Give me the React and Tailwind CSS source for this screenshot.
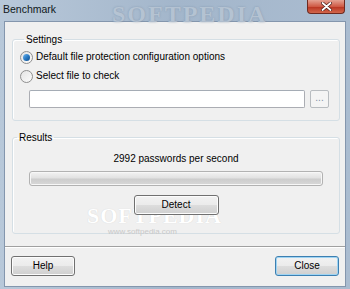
import React from 'react';

const font = { fontFamily: '"Liberation Sans", Arial, sans-serif' };

function Radio({ checked, label }) {
  return (
    <label className="flex items-center h-[14px] gap-[3px] text-[10px] leading-[14px] text-black">
      <span className="w-[13px] h-[13px] rounded-full border border-[#8f8f8f] bg-gradient-to-br from-[#e4e4e4] to-[#fbfbfb] flex items-center justify-center">
        {checked && (
          <span className="w-[7px] h-[7px] rounded-full bg-gradient-to-br from-[#6fb8f0] via-[#2a7bc4] to-[#0c4c8c]" />
        )}
      </span>
      <span>{label}</span>
    </label>
  );
}

function Button({ children, focused, className = '' }) {
  return (
    <button
      className={`relative z-10 rounded-[3px] border text-[10px] text-black leading-none flex items-center justify-center bg-[linear-gradient(#f2f2f2_0%,#ebebeb_50%,#dddddd_51%,#cfcfcf_100%)] ${
        focused
          ? 'border-[#3c7fb1] shadow-[inset_0_0_0_1px_#9fd4f3]'
          : 'border-[#707070] shadow-[inset_0_0_0_1px_#fcfcfc]'
      } ${className}`}
    >
      {children}
    </button>
  );
}

export default function App() {
  return (
    <div
      className="w-[350px] h-[289px] relative overflow-hidden flex flex-col bg-[linear-gradient(90deg,#b8c8d9,#a3b6cb_50%,#aabcd0)]"
      style={font}
    >
      {/* title bar */}
      <div className="relative h-[21px] flex items-start justify-between shrink-0">
        <span className="relative z-10 pl-[3px] pt-[3px] text-[10.5px] leading-[13px] text-[#101820]">Benchmark</span>
        <div
          className="absolute left-[112px] top-[-4px] text-[24px] font-bold tracking-[2px] text-[#b9c6d4] opacity-80 [text-shadow:0_0_2px_#7f93aa]"
          style={{ fontFamily: '"Liberation Serif", serif' }}
        >
          SOFTPEDIA
        </div>
        <div className="relative z-10 mr-[5px] w-[38px] h-[14px] rounded-b-[4px] border border-t-0 border-[#6e2a20] bg-[linear-gradient(#e4a192,#cf5a45_50%,#b8321f_51%,#d2674c)] flex items-center justify-center">
          <svg width="11" height="9" viewBox="0 0 11 9">
            <path d="M1.5 1 L9.5 8 M9.5 1 L1.5 8" stroke="#4a1a14" strokeWidth="3.2" strokeLinecap="round" />
            <path d="M1.5 1 L9.5 8 M9.5 1 L1.5 8" stroke="#ffffff" strokeWidth="1.8" strokeLinecap="round" />
          </svg>
        </div>
      </div>

      {/* client area */}
      <div className="mx-[4px] mb-[2px] flex-1 border border-[#8496ad] bg-[#f0f0f0] flex flex-col">
        <fieldset className="mt-[11px] ml-[7px] mr-[5px] border border-[#d5dfe5] rounded-[3px] shadow-[inset_1px_1px_0_#ffffff] pl-[7px] pt-[4px] pb-[12px] pr-[10px]">
          <legend className="ml-[4px] px-[2px] text-[10px] leading-[13px] text-black">Settings</legend>
          <div className="flex flex-col gap-[5px]">
            <Radio checked label="Default file protection configuration options" />
            <Radio label="Select file to check" />
          </div>
          <div className="flex items-center gap-[5px] mt-[7px] ml-[9px]">
            <div className="w-[276px] h-[18px] rounded-[2px] border border-[#abadb3] border-t-[#a5acb5] bg-white" />
            <div className="w-[19px] h-[18px] rounded-[2px] border border-[#b8bcc0] bg-[#f4f4f4] flex items-center justify-center text-[10px] leading-none text-[#7f8fa6] pb-[2px]">
              ...
            </div>
          </div>
        </fieldset>

        <fieldset className="relative mt-[10px] ml-[7px] mr-[5px] border border-[#d5dfe5] rounded-[3px] shadow-[inset_1px_1px_0_#ffffff] pt-[8px] pb-[18px] flex flex-col items-center">
          <legend className="ml-[4px] px-[2px] text-[10px] leading-[13px] text-black">Results</legend>
          <div className="text-[10px] leading-[13px] text-black text-center">2992 passwords per second</div>
          <div className="mt-[6px] mx-auto w-[294px] h-[15px] rounded-[3px] border border-[#b2b2b2] bg-[linear-gradient(#f3f3f3,#e2e2e2_45%,#cdcdcd_55%,#d8d8d8)] shadow-[inset_0_0_0_1px_#f7f7f7]" />
          <Button className="mt-[9px] w-[85px] h-[20px]">Detect</Button>
          {/* softpedia watermark */}
          <div
            className="absolute left-[74px] top-[55px] text-[22px] font-bold tracking-[1px] text-white [text-shadow:0_0_1px_#cfcfcf]"
            style={{ fontFamily: '"Liberation Serif", serif' }}
          >
            SOFTPEDIA
          </div>
          <div className="absolute left-[95px] top-[83px] text-[8px] leading-[10px] text-[#c8c8c8]">
            www.softpedia.com
          </div>
        </fieldset>

        <div className="mt-[12px] h-[2px] border-t border-[#a0a0a0] border-b border-b-white" />

        <div className="mt-[8px] mx-[6px] flex justify-between">
          <Button className="w-[64px] h-[20px]">Help</Button>
          <Button focused className="w-[64px] h-[20px]">Close</Button>
        </div>
      </div>
    </div>
  );
}
